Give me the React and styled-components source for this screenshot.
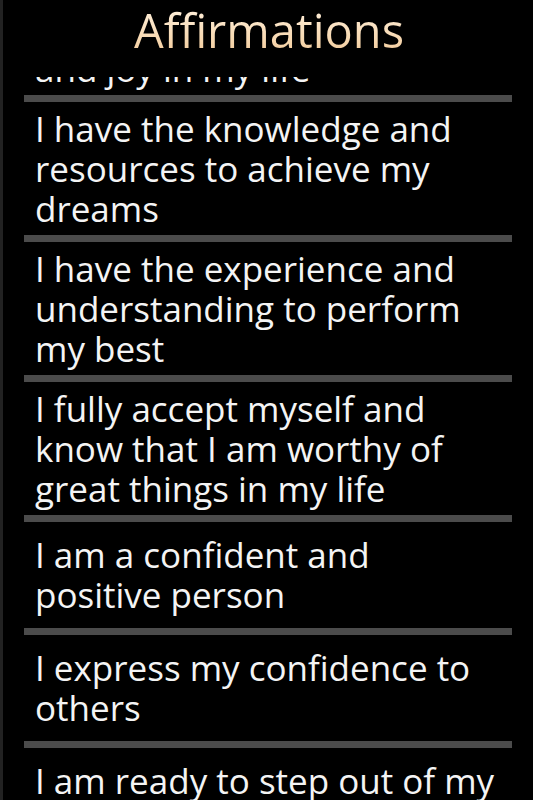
import React from "react";
import styled, { createGlobalStyle } from "styled-components";

const Global = createGlobalStyle`
  html, body { margin: 0; padding: 0; background: #000; }
  body { font-family: "Open Sans", "Noto Sans", sans-serif; }
`;

const Screen = styled.div`
  width: 533px;
  height: 800px;
  background: #000;
  border-left: 3px solid #222;
  box-sizing: border-box;
  display: flex;
  flex-direction: column;
  overflow: hidden;
`;

const Header = styled.header`
  height: 77px;
  flex: none;
  box-sizing: border-box;
  padding-top: 7px;
  display: flex;
  justify-content: center;
  overflow: hidden;
`;

const Title = styled.h1`
  margin: 0 0 0 2px;
  font-family: "Open Sans", "Noto Sans", sans-serif;
  font-weight: 400;
  font-size: 47px;
  line-height: 47px;
  background: linear-gradient(180deg, #fff0dc 0%, #f6d6ad 50%, #e6ad74 100%);
  -webkit-background-clip: text;
  background-clip: text;
  color: transparent;
`;

const ListViewport = styled.div`
  flex: 1;
  overflow: hidden;
`;

const List = styled.ul`
  list-style: none;
  margin: -115px 21px 0 21px;
  padding: 0;
`;

const Item = styled.li`
  box-sizing: border-box;
  min-height: 113px;
  height: ${(p) => (p.$partial ? "140px" : "auto")};
  overflow: hidden;
  padding: 6.5px 13px 6.5px 11px;
  border-bottom: 7px solid #4b4b4b;
  display: flex;
  flex-direction: column;
  justify-content: ${(p) => (p.$partial ? "flex-end" : "center")};
  color: #f4f4f4;
  font-size: 35px;
  line-height: 40px;
`;

const items = [
  "I am grateful for the peace and joy in my life",
  "I have the knowledge and resources to achieve my dreams",
  "I have the experience and understanding to perform my best",
  "I fully accept myself and know that I am worthy of great things in my life",
  "I am a confident and positive person",
  "I express my confidence to others",
  "I am ready to step out of my comfort zone",
];

export default function App() {
  return (
    <>
      <Global />
      <Screen>
        <Header>
          <Title>Affirmations</Title>
        </Header>
        <ListViewport>
          <List>
            {items.map((t, i) => (
              <Item key={i} $partial={i === 0}>
                {t}
              </Item>
            ))}
          </List>
        </ListViewport>
      </Screen>
    </>
  );
}
